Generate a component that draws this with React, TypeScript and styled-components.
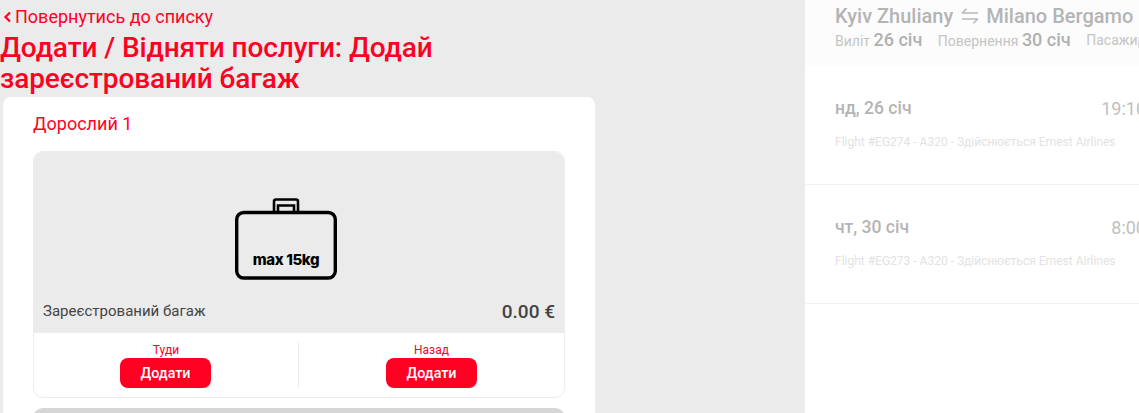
import React from "react";
import styled, { createGlobalStyle } from "styled-components";

const RED = "#ff0022";

const GlobalStyle = createGlobalStyle`
  html, body {
    margin: 0;
    height: 413px;
    overflow: hidden;
    background: #ebebeb;
    font-family: Roboto, "Noto Sans", sans-serif;
  }
  * { box-sizing: border-box; }
`;

const Page = styled.div`
  display: grid;
  grid-template-columns: 805px 400px;
  width: 1139px;
  height: 413px;
  overflow: hidden;
`;

const Main = styled.main`
  width: 600px;
  height: 413px;
  overflow: hidden;
`;

const BackLink = styled.a`
  display: flex;
  align-items: center;
  gap: 3px;
  height: 32px;
  padding: 1px 0 0 3px;
  color: ${RED};
  font-size: 18px;
`;

const Title = styled.h1`
  margin: 0 0 3px;
  width: 500px;
  color: ${RED};
  font-size: 28px;
  font-weight: 500;
  letter-spacing: -0.1px;
  line-height: 31px;
`;

const Card = styled.section`
  margin-left: 3px;
  width: 592px;
  padding: 15px 30px 0;
  background: #fff;
  border-radius: 8px 8px 0 0;
  height: 320px;
`;

const Passenger = styled.h2`
  margin: 0 0 15px;
  color: ${RED};
  font-size: 18px;
  font-weight: 400;
  line-height: 24px;
`;

const Option = styled.article<{ $muted?: boolean }>`
  border: 1px solid #ececec;
  border-radius: 10px;
  overflow: hidden;
  margin-bottom: 10px;
  background: ${(p) => (p.$muted ? "#d6d6d6" : "#fff")};
  ${(p) => p.$muted && "height: 40px; border: 0;"}
`;

const Preview = styled.div`
  background: #ebebeb;
  height: 181px;
  padding: 0 9px;
  display: flex;
  flex-direction: column;
  align-items: stretch;
`;

const BagIcon = styled.svg`
  display: block;
  align-self: center;
  margin: 45px 26px 0 0;
`;

const PreviewFooter = styled.div`
  display: flex;
  justify-content: space-between;
  align-items: center;
  margin-top: 17px;
  height: 24px;
`;

const OptionName = styled.span`
  color: #444;
  font-size: 15px;
`;

const Price = styled.span`
  color: #444;
  font-size: 19px;
  font-weight: 500;
`;

const Directions = styled.div`
  display: grid;
  grid-template-columns: 1fr 1fr;
  padding: 9px 0 9px;
`;

const Direction = styled.div<{ $divided?: boolean }>`
  display: flex;
  flex-direction: column;
  align-items: center;
  ${(p) => p.$divided && "border-right: 1px solid #ececec;"}
`;

const DirectionLabel = styled.span`
  color: ${RED};
  font-size: 12px;
  line-height: 16px;
`;

const AddButton = styled.button<{ $first?: boolean }>`
  width: 91px;
  height: 30px;
  border: 0;
  border-radius: 8px;
  background: ${RED};
  color: #fff;
  font-family: inherit;
  font-size: 14.3px;
  font-weight: 500;
  ${(p) => p.$first && "margin-right: 1px;"}
`;

const Aside = styled.aside`
  background: #fff;
  height: 413px;
  overflow: hidden;
`;

const Summary = styled.header`
  background: #fcfcfc;
  height: 66px;
  padding: 2px 30px 0;
  white-space: nowrap;
`;

const Route = styled.div`
  display: flex;
  align-items: center;
  gap: 7.5px;
  color: #b4b4b4;
  font-size: 20px;
  font-weight: 500;
  line-height: 28px;
`;

const Meta = styled.div`
  display: flex;
  gap: 15.5px;
  margin-top: -1px;
  line-height: 22px;
`;

const MetaItem = styled.span`
  color: #c4c4c4;
  font-size: 14px;
  b {
    color: #b0b0b0;
    font-size: 18px;
    font-weight: 500;
  }
`;

const Flight = styled.div`
  height: 119px;
  padding: 30px 30px 0;
  border-bottom: 1px solid #f2f2f2;
`;

const FlightTop = styled.div`
  display: flex;
  justify-content: space-between;
  align-items: center;
  width: 311px;
  height: 24px;
`;

const FlightDate = styled.span`
  color: #b4b4b4;
  font-size: 17.5px;
  font-weight: 500;
`;

const FlightTime = styled.span`
  color: #c0c0c0;
  font-size: 18px;
`;

const FlightInfo = styled.div`
  margin-top: 14px;
  color: #e2e2e2;
  font-size: 12px;
  line-height: 16px;
`;

const SwapIcon = () => (
  <svg width="18" height="16" viewBox="0 0 18 16" fill="none" stroke="#b8b8b8" strokeWidth="1.6">
    <path d="M1 5h16M5.5 .8 1.2 5M1 11h16M12.5 15.2l4.3-4.2" />
  </svg>
);

const BackChevron = () => (
  <svg width="9" height="12" viewBox="0 0 9 12" fill="none" stroke={RED} strokeWidth="2.2">
    <path d="M7 1.5 2.5 6 7 10.5" />
  </svg>
);

const App = () => {
  return (
    <Page>
      <GlobalStyle />
      <Main>
        <BackLink>
          <BackChevron />
          Повернутись до списку
        </BackLink>
        <Title>Додати / Відняти послуги: Додай зареєстрований багаж</Title>
        <Card>
          <Passenger>Дорослий 1</Passenger>
          <Option>
            <Preview>
              <BagIcon width="102" height="85" viewBox="0 0 102 85" fill="none" stroke="#000" strokeWidth="3.4">
                <rect x="1.7" y="15.5" width="98.6" height="65.5" rx="7" />
                <path d="M39 15V4.5a2 2 0 0 1 2-2h20a2 2 0 0 1 2 2V15M43 15V8.5h16V15" strokeWidth="2.6" />
                <text
                  x="51"
                  y="68"
                  textAnchor="middle"
                  fill="#000"
                  stroke="none"
                  fontFamily="Inter, sans-serif"
                  fontSize="15"
                  fontWeight="800"
                  letterSpacing="-0.4"
                >
                  max 15kg
                </text>
              </BagIcon>
              <PreviewFooter>
                <OptionName>Зареєстрований багаж</OptionName>
                <Price>0.00 €</Price>
              </PreviewFooter>
            </Preview>
            <Directions>
              <Direction $divided>
                <DirectionLabel>Туди</DirectionLabel>
                <AddButton $first>Додати</AddButton>
              </Direction>
              <Direction>
                <DirectionLabel>Назад</DirectionLabel>
                <AddButton>Додати</AddButton>
              </Direction>
            </Directions>
          </Option>
          <Option $muted />
        </Card>
      </Main>
      <Aside>
        <Summary>
          <Route>
            Kyiv Zhuliany <SwapIcon /> Milano Bergamo
          </Route>
          <Meta>
            <MetaItem>
              Виліт <b>26 січ</b>
            </MetaItem>
            <MetaItem>
              Повернення <b>30 січ</b>
            </MetaItem>
            <MetaItem>Пасажири</MetaItem>
          </Meta>
        </Summary>
        <Flight>
          <FlightTop>
            <FlightDate>нд, 26 січ</FlightDate>
            <FlightTime>19:10</FlightTime>
          </FlightTop>
          <FlightInfo>Flight #EG274 - A320 - Здійснюється Ernest Airlines</FlightInfo>
        </Flight>
        <Flight>
          <FlightTop>
            <FlightDate>чт, 30 січ</FlightDate>
            <FlightTime>8:00</FlightTime>
          </FlightTop>
          <FlightInfo>Flight #EG273 - A320 - Здійснюється Ernest Airlines</FlightInfo>
        </Flight>
      </Aside>
    </Page>
  );
};

export default App;
